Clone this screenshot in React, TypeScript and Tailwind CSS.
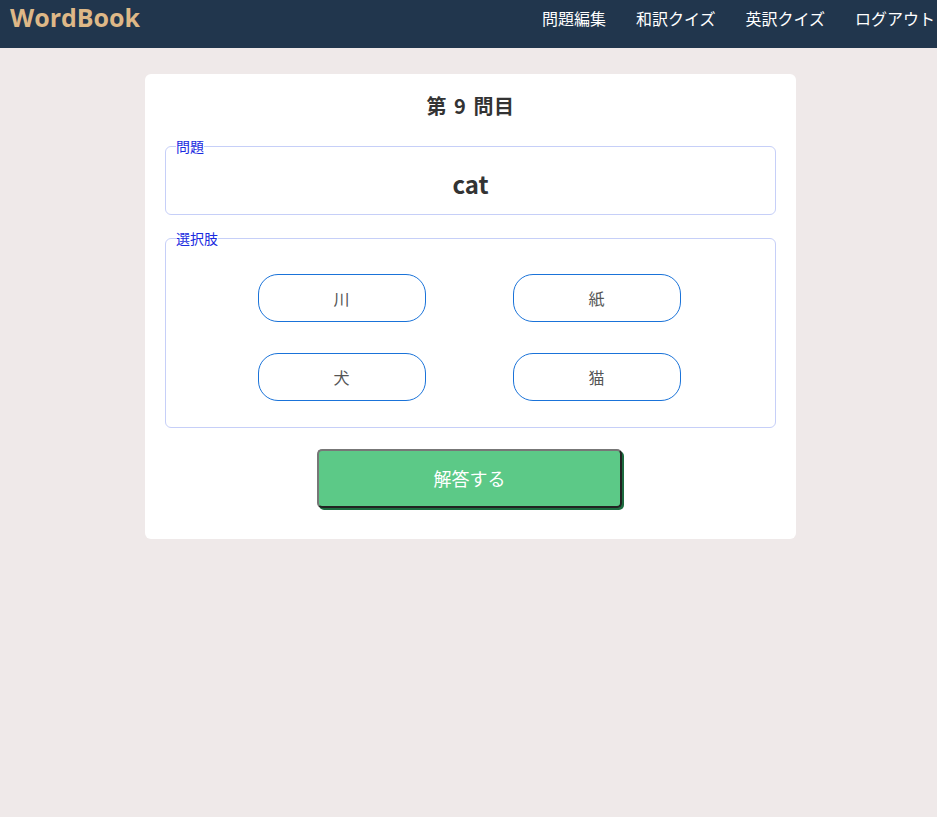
import React, { useState } from 'react'

const choices = ['川', '紙', '犬', '猫']

const font = "font-['Noto_Sans_CJK_JP','Noto_Sans',sans-serif]"

const App = () => {
  const [selected, setSelected] = useState<string | null>(null)

  return (
    <div className={`min-h-screen bg-[#efe9e9] ${font}`}>
      <header className="flex h-12 items-start justify-between bg-[#21364d] pl-[10px] pr-[2px]">
        <h1 className="mt-[1px] font-['Open_Sans',sans-serif] text-[25px] font-bold leading-[32px] text-[#deb887]">
          WordBook
        </h1>
        <nav className="flex pt-[6px]">
          {['問題編集', '和訳クイズ', '英訳クイズ', 'ログアウト'].map((item) => (
            <a key={item} href="#" className="ml-[30px] text-[16px] leading-[24px] text-white">
              {item}
            </a>
          ))}
        </nav>
      </header>

      <main className="flex justify-center pl-[4px] pt-[26px]">
        <div className="w-[651px] rounded-[6px] bg-white px-5 pb-[31px] pt-[18px]">
          <h2 className="text-center text-[20px] font-bold leading-[28px] tracking-[0.5px] text-[#333] [word-spacing:2px]">
            第 9 問目
          </h2>

          <fieldset className="mt-[17px] h-[78px] rounded-[6px] border border-[#c6cff8] px-[10px]">
            <legend className="text-[14px] leading-[18px] text-[#1a2be0]">問題</legend>
            <p className="mt-[11px] text-center text-[24px] font-bold leading-[36px] text-[#333]">cat</p>
          </fieldset>

          <fieldset className="mt-[14px] rounded-[6px] border border-[#c6cff8] px-[10px] pb-[26px]">
            <legend className="text-[14px] leading-[18px] text-[#1a2be0]">選択肢</legend>
            <div className="mt-[27px] grid grid-cols-2 gap-y-[31px] pl-[38px] pr-[41px]">
              {choices.map((c) => (
                <div key={c} className="flex justify-center">
                  <button
                    type="button"
                    onClick={() => setSelected(c)}
                    className={`h-12 w-[168px] rounded-[20px] border border-[#1a73d9] text-[16px] text-[#555] ${
                      selected === c ? 'bg-[#e8f1fc]' : 'bg-white'
                    }`}
                  >
                    {c}
                  </button>
                </div>
              ))}
            </div>
          </fieldset>

          <div className="mt-[21px] flex justify-center">
            <button
              type="button"
              className="ml-[-2px] h-[59px] w-[305px] rounded-[5px] border-2 border-b-[#222] border-l-[#777] border-r-[#222] border-t-[#777] bg-[#5cc987] text-[18px] text-white shadow-[2px_2px_0_#1d6b40]"
            >
              解答する
            </button>
          </div>
        </div>
      </main>
    </div>
  )
}

export default App
